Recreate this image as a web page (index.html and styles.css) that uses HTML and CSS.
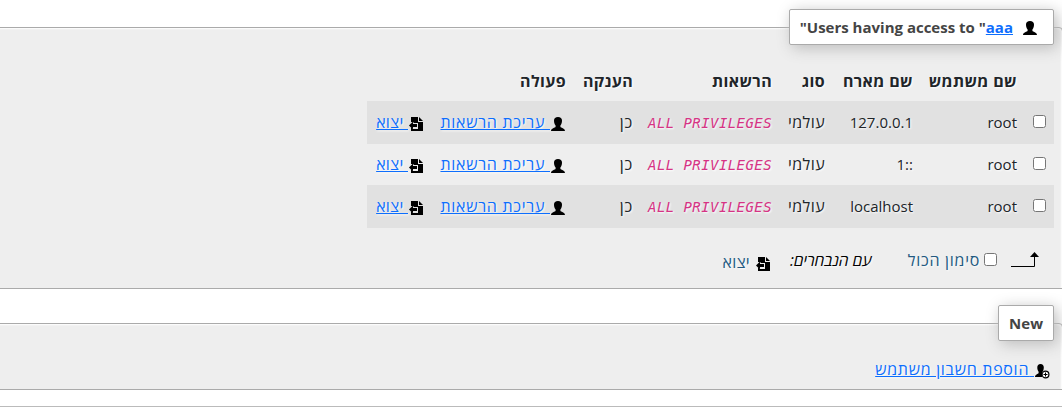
FILE: index.html
```html
<!DOCTYPE html>
<html lang="he" dir="rtl">
<head>
    <meta charset="UTF-8">
    <meta name="viewport" content="width=device-width, initial-scale=1.0">
    <title>Privileges</title>
    <link rel="stylesheet" href="styles.css">
</head>
<body>

    <!-- Icon shapes -->
    <svg class="sprite" width="0" height="0">
        <symbol id="user" viewBox="0 0 16 16">
            <path d="M8 1C5.500 1 4 2.300 4 4.600c0 2 .5 3.700 1.600 4.900v1.200C5.300 11.900 1 12 1 15h14c0-3-4.300-3.100-4.600-4.300V9.500c1.100-1.200 1.600-2.900 1.600-4.900C12 2.300 10.500 1 8 1z"/>
        </symbol>
        <symbol id="export" viewBox="0 0 16 16">
            <path d="M3 1h7v5h5v9H3v-3l1-1v2h6V7H5l1-1H3zM11 1l4 4h-4z"/>
            <path d="M1 9.500L5 5.500V8h4v3H5v2.500z"/>
        </symbol>
        <symbol id="user-add" viewBox="0 0 16 16">
            <path d="M6.500 1C4.400 1 3.300 2.300 3.300 4.300c0 2 .4 3.400 1.300 4.500v1.300C4.100 11.300 1 11.500 1 14h7V9.500c1-.9 1.800-2.900 1.800-5C9.800 2.300 8.700 1 6.500 1z"/>
            <circle cx="11.500" cy="11.500" r="3.400" fill="#fff" stroke="#000" stroke-width="1.200"/>
            <path d="M11 9.500h1V11h1.500v1H12v1.500h-1V12H9.500v-1H11z"/>
        </symbol>
    </svg>

    <!-- Users with access -->
    <section class="panel users-panel">
        <h2 class="legend"><svg class="icon"><use href="#user"/></svg><span dir="ltr">"Users having access to "<a href="#">aaa</a></span></h2>

        <table class="users">
            <colgroup>
                <col class="c-check"><col class="c-user"><col class="c-host"><col class="c-type">
                <col class="c-priv"><col class="c-grant"><col class="c-edit"><col class="c-export">
            </colgroup>
            <thead>
                <tr>
                    <th></th>
                    <th>שם משתמש</th>
                    <th>שם מארח</th>
                    <th>סוג</th>
                    <th>הרשאות</th>
                    <th>הענקה</th>
                    <th colspan="2">פעולה</th>
                </tr>
            </thead>
            <tbody>
                <tr>
                    <td><input type="checkbox"></td>
                    <td>root</td>
                    <td>127.0.0.1</td>
                    <td class="type">עולמי</td>
                    <td><code>ALL PRIVILEGES</code></td>
                    <td class="he">כן</td>
                    <td><a href="#" class="he"><svg class="icon"><use href="#user"/></svg> עריכת הרשאות</a></td>
                    <td><a href="#" class="he export"><svg class="icon"><use href="#export"/></svg> יצוא</a></td>
                </tr>
                <tr>
                    <td><input type="checkbox"></td>
                    <td>root</td>
                    <td>::1</td>
                    <td class="type">עולמי</td>
                    <td><code>ALL PRIVILEGES</code></td>
                    <td class="he">כן</td>
                    <td><a href="#" class="he"><svg class="icon"><use href="#user"/></svg> עריכת הרשאות</a></td>
                    <td><a href="#" class="he export"><svg class="icon"><use href="#export"/></svg> יצוא</a></td>
                </tr>
                <tr>
                    <td><input type="checkbox"></td>
                    <td>root</td>
                    <td>localhost</td>
                    <td class="type">עולמי</td>
                    <td><code>ALL PRIVILEGES</code></td>
                    <td class="he">כן</td>
                    <td><a href="#" class="he"><svg class="icon"><use href="#user"/></svg> עריכת הרשאות</a></td>
                    <td><a href="#" class="he export"><svg class="icon"><use href="#export"/></svg> יצוא</a></td>
                </tr>
            </tbody>
        </table>

        <div class="bulk">
            <svg class="arrow" width="38" height="22" viewBox="0 0 38 22"><path d="M5 17.500h23.500V7" fill="none" stroke="#000"/><path d="M24 8l4.500-5L33 8z"/></svg>
            <label class="check-all"><input type="checkbox"><span class="he">סימון הכול</span></label>
            <em>עם הנבחרים:</em>
            <button type="button"><svg class="icon"><use href="#export"/></svg><span class="he export">יצוא</span></button>
        </div>
    </section>

    <!-- New user -->
    <section class="panel new-panel">
        <h2 class="legend">New</h2>
        <a href="#" class="add-user he"><svg class="icon"><use href="#user-add"/></svg> <span>הוספת חשבון משתמש</span></a>
    </section>

    <hr>

</body>
</html>
```

FILE: styles.css
```css
body {
    margin: 0;
    padding-top: 27px;
    font-family: "Open Sans", "Noto Sans", sans-serif;
    font-size: 15px;
    line-height: 24px;
    color: #212529;
    background-color: #fff;
    overflow: hidden;
}
.sprite {
    position: absolute;
}
.icon {
    width: 16px;
    height: 16px;
    flex: none;
    vertical-align: -4px;
}
a {
    color: #0d6efd;
}
/* Hebrew text is set a little larger and looser than the Latin */
.he {
    font-size: 16px;
    letter-spacing: 0.7px;
}
.he.export {
    letter-spacing: 0.3px;
}
input[type="checkbox"] {
    width: 13px;
    height: 13px;
    margin: 0;
}
.panel {
    box-sizing: border-box;
    margin: 0 -1px 0 -4px;
    border: 1px solid #aaa;
    border-radius: 0 4px 0 0;
    background-color: #eee;
    box-shadow: inset -1px 1px 2px #fff;
    text-shadow: 1px 1px 2px #fff;
}
.users-panel {
    height: 262px;
    padding-right: 8px;
}
.new-panel {
    height: 67px;
    margin-top: 34px;
    padding-right: 8px;
}
/* Box that straddles the top border of the panel */
.legend {
    box-sizing: border-box;
    display: flex;
    align-items: center;
    width: max-content;
    height: 36px;
    margin: -19px 0 0;
    padding: 0 10px;
    border: 1px solid #aaa;
    border-radius: 2px;
    background-color: #fff;
    box-shadow: 3px 3px 15px #bbb;
    color: #444;
    font-size: 15px;
    font-weight: bold;
    text-shadow: none;
}
.legend .icon {
    margin: 2px 5px 0 9px;
    color: #000;
}
.users {
    width: 687px;
    margin-top: 18px;
    table-layout: fixed;
    border-collapse: collapse;
}
.c-check { width: 29px; }
.c-user { width: 104px; }
.c-host { width: 88px; }
.c-type { width: 53px; }
.c-priv { width: 139px; }
.c-grant { width: 67px; }
.c-edit { width: 142px; }
.c-export { width: 65px; }
.users th,
.users td {
    padding: 0 8px;
    text-align: right;
    white-space: nowrap;
}
.users th {
    height: 36px;
    padding-bottom: 2px;
    font-size: 16px;
    letter-spacing: 0.35px;
}
.users td {
    height: 42px;
}
.users td.type {
    font-size: 16px;
    letter-spacing: 0.4px;
}
.users td input {
    display: block;
    margin-bottom: 2px;
}
.users tbody tr:nth-child(odd) td {
    background-color: #e1e1e1;
    box-shadow: 0 1px 0 #e1e1e1;
}
code {
    color: #d63384;
    font-family: "DejaVu Sans Mono", monospace;
    font-size: 14px;
    font-style: italic;
    letter-spacing: 0.42px;
}
.bulk {
    display: flex;
    align-items: center;
    height: 24px;
    margin-top: 21px;
    padding-right: 10px;
}
.check-all {
    display: flex;
    align-items: center;
    gap: 4px;
    margin-right: 9px;
    color: #235a81;
}
.check-all input {
    margin-bottom: 2px;
}
.bulk em {
    margin-right: 36px;
    color: #000;
    font-size: 15.7px;
}
.bulk button {
    display: flex;
    align-items: center;
    gap: 5px;
    margin-right: 19px;
    padding: 4px 0 0;
    border: 0;
    background: none;
    color: #235a81;
    font: inherit;
    text-shadow: inherit;
}
.bulk button .icon {
    margin-top: 3px;
}
.add-user {
    display: block;
    width: max-content;
    margin: 16px 4px 0 0;
}
hr {
    margin: 16px 0 0;
    border: 0;
    border-top: 1px solid #bbb;
}
```
